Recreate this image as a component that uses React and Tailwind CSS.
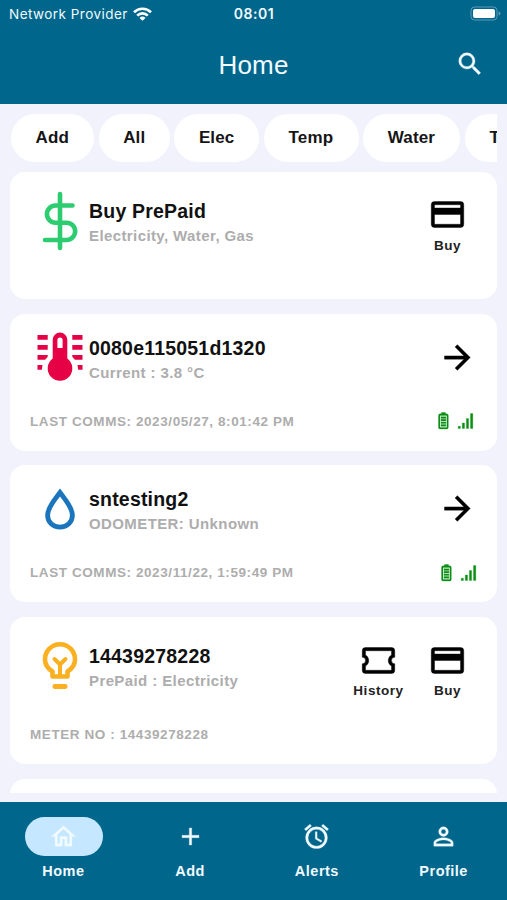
import React from "react";

const paths = {
  magnify:
    "M9.5,3A6.5,6.5 0 0,1 16,9.5C16,11.11 15.41,12.59 14.44,13.73L14.71,14H15.5L20.5,19L19,20.5L14,15.5V14.71L13.73,14.44C12.59,15.41 11.11,16 9.5,16A6.5,6.5 0 0,1 3,9.5A6.5,6.5 0 0,1 9.5,3M9.5,5C7,5 5,7 5,9.5C5,12 7,14 9.5,14C12,14 14,12 14,9.5C14,7 12,5 9.5,5Z",
  arrow: "M4,11V13H16L10.5,18.5L11.92,19.92L19.84,12L11.92,4.08L10.5,5.5L16,11H4Z",
  card: "M20,4H4A2,2 0 0,0 2,6V18A2,2 0 0,0 4,20H20A2,2 0 0,0 22,18V6A2,2 0 0,0 20,4M4,6H20V8H4V6M4,12H20V18H4V12Z",
  ticket:
    "M4,4A2,2 0 0,0 2,6V10A2,2 0 0,1 4,12A2,2 0 0,1 2,14V18A2,2 0 0,0 4,20H20A2,2 0 0,0 22,18V14A2,2 0 0,1 20,12A2,2 0 0,1 22,10V6A2,2 0 0,0 20,4H4M4,6H20V8.54C18.76,9.25 18,10.57 18,12C18,13.43 18.76,14.75 20,15.46V18H4V15.46C5.24,14.75 6,13.43 6,12C6,10.57 5.24,9.25 4,8.54V6Z",
  home: "M12 5.69L17 10.19V18H15V12H9V18H7V10.19L12 5.69M12 3L2 12H5V20H11V14H13V20H19V12H22L12 3Z",
  plus: "M19,13H13V19H11V13H5V11H11V5H13V11H19V13Z",
  alarm:
    "M12,20A7,7 0 0,1 5,13A7,7 0 0,1 12,6A7,7 0 0,1 19,13A7,7 0 0,1 12,20M12,4A9,9 0 0,0 3,13A9,9 0 0,0 12,22A9,9 0 0,0 21,13A9,9 0 0,0 12,4M12.5,8H11V14L15.75,16.85L16.5,15.62L12.5,13.25V8M7.88,3.39L6.6,1.86L2,5.71L3.29,7.24L7.88,3.39M22,5.72L17.4,1.86L16.11,3.39L20.71,7.25L22,5.72Z",
  account:
    "M12,4A4,4 0 0,1 16,8A4,4 0 0,1 12,12A4,4 0 0,1 8,8A4,4 0 0,1 12,4M12,6A2,2 0 0,0 10,8A2,2 0 0,0 12,10A2,2 0 0,0 14,8A2,2 0 0,0 12,6M12,13C14.67,13 20,14.33 20,17V20H4V17C4,14.33 9.33,13 12,13M12,14.9C9.03,14.9 5.9,16.36 5.9,17V18.1H18.1V17C18.1,16.36 14.97,14.9 12,14.9Z",
};

function Icon({ name, className }) {
  return (
    <svg
      viewBox="0 0 24 24"
      fill="currentColor"
      fillRule="evenodd"
      stroke="currentColor"
      strokeWidth="0.25"
      strokeLinejoin="round"
      className={className}
    >
      <path d={paths[name]} />
    </svg>
  );
}

/* Card artwork shares a 48x60 canvas */
function DollarArt() {
  return (
    <svg viewBox="0 0 48 60" className="h-[60px] w-12" fill="none" stroke="#2ecc71" strokeWidth="4.6" strokeLinecap="round">
      <path d="M24 3V57M36.500 14.500H19.500A8.600 8.600 0 0 0 19.500 31.700H30.500A8.600 8.600 0 0 1 30.500 49H9" />
    </svg>
  );
}

function ThermometerArt() {
  return (
    <svg viewBox="0 0 48 60" className="h-[60px] w-12" fill="#e60045">
      <path
        fillRule="evenodd"
        d="M24 5.500a7.300 7.300 0 0 0-7.300 7.300V31.600a12.300 12.300 0 1 0 14.600 0V12.800A7.300 7.300 0 0 0 24 5.500ZM21.400 13a2.600 2.600 0 0 1 5.200 0v8h-5.200Z"
      />
      <path d="M1.500 8h10.200v4.700H1.500ZM1.500 18h10.200v4.700H1.500ZM1.500 28h10.200v1.800l-2.600 2.900H1.500ZM1.500 38h5l-.7 4.700H1.500ZM36.300 8h10.200v4.700H36.300ZM36.300 18h10.200v4.700H36.300ZM36.300 28h10.200v4.700h-7.600l-2.600-2.900ZM46.500 38h-5l.7 4.700h4.300Z" />
    </svg>
  );
}

function DropArt() {
  return (
    <svg viewBox="0 0 48 60" className="h-[60px] w-12" fill="none" stroke="#1b75bc" strokeWidth="4.800">
      <path d="M24 13.500C20 19 11.600 28 11.600 36.300C11.600 43.200 17 48.200 24 48.200C31 48.200 36.400 43.200 36.400 36.300C36.400 28 28 19 24 13.500Z" />
    </svg>
  );
}

function BulbArt() {
  return (
    <svg viewBox="0 0 48 60" className="h-[60px] w-12" fill="none" stroke="#fbb021" strokeWidth="4.600" strokeLinecap="round" strokeLinejoin="round">
      <path d="M16.500 42.500V37.500C11.500 34.500 9 30.500 9 25.500C9 17 15.700 10.200 24 10.200C32.300 10.200 39 17 39 25.500C39 30.500 36.500 34.500 31.500 37.500V42.500Z" />
      <path d="M24 41V30.500M18.500 25L24 30.500L29.500 25" strokeWidth="4" />
      <path d="M18.800 52.500H29.200" strokeWidth="4.800" />
    </svg>
  );
}

function Signals() {
  return (
    <svg viewBox="0 0 36 18" className="h-[18px] w-9" fill="#0a8f14" stroke="#0a8f14" strokeWidth="0.3">
      <path
        fillRule="evenodd"
        d="M3.500.5h4v1.300h1.200a1.600 1.600 0 0 1 1.600 1.600v12a1.600 1.600 0 0 1-1.600 1.600H2.100a1.600 1.600 0 0 1-1.600-1.600v-12a1.600 1.600 0 0 1 1.600-1.600h1.400ZM2 3.400v12.100h6.900V3.400Z"
      />
      <path d="M3 4.700h4.900v1.700H3ZM3 7.300h4.900V9H3ZM3 9.900h4.900v1.700H3ZM3 12.600h4.900v1.700H3Z" />
      <path d="M20.200 14.200h2.200v2.300h-2.200ZM24.300 11h2.200v5.500h-2.200ZM28.400 6.500h2.200v10h-2.200ZM32.500 1.500h2.300v15h-2.300Z" />
    </svg>
  );
}

const chips = [
  { label: "Add", width: "w-[83px]" },
  { label: "All", width: "w-[71px]" },
  { label: "Elec", width: "w-[85px]" },
  { label: "Temp", width: "w-[94.500px]" },
  { label: "Water", width: "w-[97px]" },
  { label: "T", width: "w-[100px]" },
];

function Action({ name, label }) {
  return (
    <div className="flex w-[69px] flex-col items-center">
      <div className="flex h-10 items-center">
        <Icon name={name} className="h-[39px] w-[39px]" />
      </div>
      <span className="mt-[2px] text-[13.500px] leading-[18px] font-bold tracking-[0.55px] text-[#222]">{label}</span>
    </div>
  );
}

function Card({ height, art, artPad, textPad, title, subtitle, footer, footerPad, actions, arrow, signals }) {
  return (
    <section className={`flex shrink-0 flex-col rounded-[15px] bg-white pl-5 ${height}`}>
      <div className="flex h-[90px] shrink-0 items-start">
        <div className={`pl-[5.600px] ${artPad}`}>{art}</div>
        <div className={`flex flex-1 flex-col pl-[5.400px] whitespace-nowrap ${textPad}`}>
          <h2 className="text-[19.500px] leading-6 font-bold tracking-[0.2px] text-[#111]">{title}</h2>
          <p className="text-[15px] leading-[25px] font-bold tracking-[0.4px] text-[#adadad]">{subtitle}</p>
        </div>
        {actions && (
          <div className="flex pt-[23px] pr-[15px]">
            {actions.map((a) => (
              <Action key={a.label} {...a} />
            ))}
          </div>
        )}
        {arrow && (
          <div className="pt-6 pr-5">
            <Icon name="arrow" className="h-[39px] w-[39px]" />
          </div>
        )}
      </div>
      {footer && (
        <div className={`flex items-start justify-between ${footerPad}`}>
          <p className="mt-px text-[13.500px] leading-[18px] font-bold tracking-[0.58px] whitespace-nowrap text-[#adadad]">{footer}</p>
          {signals && (
            <div className={signals}>
              <Signals />
            </div>
          )}
        </div>
      )}
    </section>
  );
}

const tabs = [
  { icon: "home", label: "Home", active: true },
  { icon: "plus", label: "Add" },
  { icon: "alarm", label: "Alerts" },
  { icon: "account", label: "Profile" },
];

export default function App() {
  return (
    <div className="flex h-[900px] w-[507px] flex-col overflow-hidden bg-[#f1f2fb] font-['Liberation_Sans',Arial,sans-serif] text-black">
      <header className="h-[103.500px] shrink-0 bg-[#00668b] text-[#f1faff]">
        <div className="grid h-7 grid-cols-[1fr_auto_1fr] items-center pr-[6px] pl-[9px] font-['Inter',sans-serif]">
          <div className="flex items-center gap-[5px] whitespace-nowrap">
            <span className="text-[13.500px] leading-5 tracking-[0.46px]">Network Provider</span>
            <svg viewBox="0 0 19 14" className="-mt-px h-[14px] w-[19px] shrink-0" fill="none" stroke="white" strokeWidth="2.600">
              <path d="M1 5.200A12.200 12.200 0 0 1 18 5.200M4.200 8.600A7.500 7.500 0 0 1 14.800 8.600" />
              <path d="M9.500 13.800L6.500 10.900A4.300 4.300 0 0 1 12.500 10.900Z" fill="white" stroke="none" />
            </svg>
          </div>
          <div className="pr-[2px] text-center text-[14px] leading-5 font-semibold tracking-[0.5px]">08:01</div>
          <div className="flex justify-end">
            <svg viewBox="0 0 31 15" className="-mt-px h-[15px] w-[31px]">
              <rect x="1" y="1" width="26" height="13" rx="3.500" fill="none" stroke="#5a9bb4" />
              <rect x="3" y="3" width="22" height="9" rx="2" fill="white" />
              <path d="M28.500 5.500a2 2 0 0 1 0 4Z" fill="#5a9bb4" />
            </svg>
          </div>
        </div>
        <div className="grid h-[74px] grid-cols-[1fr_auto_1fr] items-center pr-[22px] pl-[22px]">
          <span />
          <h1 className="text-[26px] leading-8 tracking-[0.2px]">Home</h1>
          <div className="flex justify-end">
            <Icon name="magnify" className="-mt-[2px] h-[30px] w-[30px]" />
          </div>
        </div>
      </header>

      <main className="mx-[10px] flex h-[689px] shrink-0 flex-col overflow-hidden">
        <div className="flex h-[68px] shrink-0 gap-[4.700px] overflow-hidden pt-[10px] pl-[1px]">
          {chips.map((c) => (
            <div
              key={c.label}
              className={`flex h-[48.500px] shrink-0 items-center rounded-full bg-white pl-[24.500px] text-[17px] font-bold tracking-[0.15px] text-[#151515] ${c.width}`}
            >
              {c.label}
            </div>
          ))}
        </div>
        <div className="flex flex-col gap-[14.700px]">
          <Card
            height="h-[127.500px]"
            art={<DollarArt />}
            artPad="pt-[19.500px]"
            textPad="pt-[27px]"
            title="Buy PrePaid"
            subtitle="Electricity, Water, Gas"
            actions={[{ name: "card", label: "Buy" }]}
          />
          <Card
            height="h-[137px]"
            art={<ThermometerArt />}
            artPad="pt-[13.500px]"
            textPad="pt-[22px]"
            title="0080e115051d1320"
            subtitle="Current : 3.8 °C"
            footer="LAST COMMS: 2023/05/27, 8:01:42 PM"
            footerPad="pt-[8px]"
            signals="pt-[0.500px] pr-[23px]"
            arrow
          />
          <Card
            height="h-[137px]"
            art={<DropArt />}
            artPad="pt-[13.500px]"
            textPad="pt-[22px]"
            title="sntesting2"
            subtitle="ODOMETER: Unknown"
            footer="LAST COMMS: 2023/11/22, 1:59:49 PM"
            footerPad="pt-[8px]"
            signals="pt-px pr-[20.500px]"
            arrow
          />
          <Card
            height="h-[147px]"
            art={<BulbArt />}
            artPad="pt-[16.500px]"
            textPad="pt-[27px]"
            title="14439278228"
            subtitle="PrePaid : Electricity"
            footer="METER NO : 14439278228"
            footerPad="pt-[18px]"
            actions={[
              { name: "ticket", label: "History" },
              { name: "card", label: "Buy" },
            ]}
          />
          <section className="h-[137px] shrink-0 rounded-[15px] bg-white" />
        </div>
      </main>

      <nav className="mt-[9.500px] grid flex-1 grid-cols-4 bg-[#00668b] pt-[14.500px] text-[#f1faff]">
        {tabs.map((t) => (
          <div key={t.label} className="flex flex-col items-center">
            <div className={`flex h-[39.500px] w-[78px] items-center justify-center rounded-full ${t.active ? "ml-px bg-[#c5e7ff]" : ""}`}>
              <Icon name={t.icon} className="h-[29px] w-[29px]" />
            </div>
            <span className="mt-[4.500px] text-[14.500px] leading-5 font-bold tracking-[0.5px]">{t.label}</span>
          </div>
        ))}
      </nav>
    </div>
  );
}
